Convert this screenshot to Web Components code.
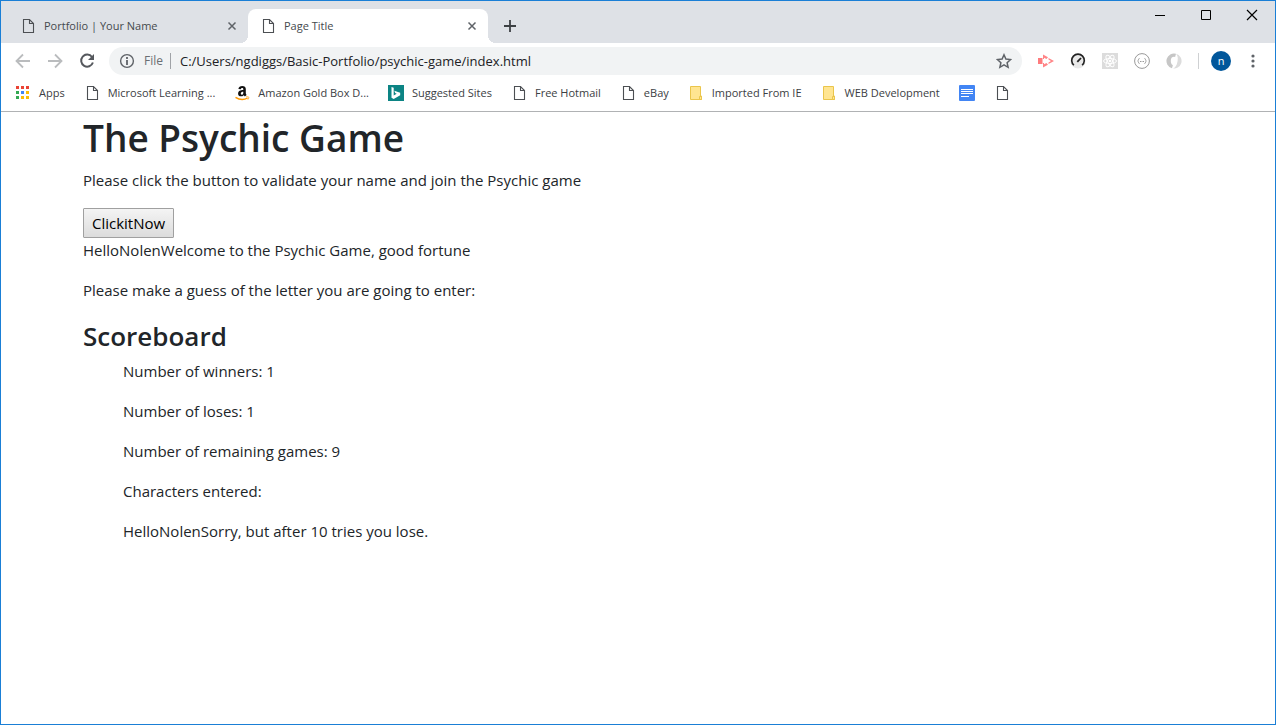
<!DOCTYPE html>
<html lang="en">
<head>
<meta charset="utf-8">
<title>Page Title</title>
<style>
html, body { height: 100%; margin: 0; }
body { font-family: "Open Sans", "Noto Sans", sans-serif; }
</style>
</head>
<body>
<browser-window>
  <browser-tab slot="tabs" label="Portfolio | Your Name"></browser-tab>
  <browser-tab slot="tabs" label="Page Title" active></browser-tab>
  <bookmark-item slot="bookmarks" icon="apps">Apps</bookmark-item>
  <bookmark-item slot="bookmarks" icon="page">Microsoft Learning ...</bookmark-item>
  <bookmark-item slot="bookmarks" icon="amazon">Amazon Gold Box D...</bookmark-item>
  <bookmark-item slot="bookmarks" icon="bing">Suggested Sites</bookmark-item>
  <bookmark-item slot="bookmarks" icon="page">Free Hotmail</bookmark-item>
  <bookmark-item slot="bookmarks" icon="page">eBay</bookmark-item>
  <bookmark-item slot="bookmarks" icon="folder">Imported From IE</bookmark-item>
  <bookmark-item slot="bookmarks" icon="folder">WEB Development</bookmark-item>
  <bookmark-item slot="bookmarks" icon="docs" name="Docs"></bookmark-item>
  <bookmark-item slot="bookmarks" icon="page" name="Untitled"></bookmark-item>
  <psychic-game></psychic-game>
</browser-window>

<script>
const ICONS = {
  page: '<path d="M3.5 1.5h6l4 4v9h-10z M9.5 1.5v4h4" fill="none" stroke="#4c4f53" stroke-width="1.100"/>',
  apps: [['#ea4335', '#ea4335', '#ea4335'], ['#34a853', '#4285f4', '#fbbc05'], ['#34a853', '#fbbc05', '#fbbc05']]
    .map((row, y) => row.map((c, x) => `<rect x="${1 + x * 5}" y="${1 + y * 5}" width="3" height="3" fill="${c}"/>`).join('')).join(''),
  amazon: '<path d="M4.4 4C4.6 1.900 6.200 1 8.200 1c2.300 0 3.600 1 3.600 3.100v4c0 .9.300 1.300.8 1.900l-1.700 1.400c-.6-.4-.9-.8-1.200-1.200-2 2-5.600 1.400-5.600-1.500 0-2.700 2.300-3.600 5.200-3.700v-.8c0-.8-.4-1.200-1.100-1.200-.8 0-1.100.4-1.300 1.200zm4.900 2.700c-1.500 0-2.500.5-2.500 1.800 0 1.700 2.500 1.600 2.500-.6z" fill="#111"/><path d="M1.500 12.300c4 2.700 8.500 2.800 12.200.7" fill="none" stroke="#f90" stroke-width="1.400"/><path d="M12 12c1.400-.4 2.400-.3 2.700.1s-.1 1.700-.8 2.500" fill="none" stroke="#f90" stroke-width=".8"/>',
  bing: '<path d="M0 0h16v16H0z" fill="#0c8484"/><path d="M3.500 2l2.200.8v7.700l3-1.700-1.500-.7-.9-2.300 5.900 2v2.500l-6.500 3.800-2.200-1.300z" fill="#fff"/>',
  folder: '<path d="M2.500 1.500h10v9.500h1v3.500h-11z" fill="#ffe591" stroke="#eac54b"/><path d="M11.500 11.500h2v3h-2z" fill="#ffe591" stroke="#eac54b"/>',
  docs: '<rect width="16" height="16" rx="1" fill="#4285f4"/><path d="M2 4.500h12M2 6.500h12M2 8.500h12M2 11.500h8" stroke="#fff"/>',
  close: '<path d="M4.500 4.500l7 7M11.500 4.500l-7 7" stroke="#5f6368" stroke-width="1.500"/>',
  plus: '<path d="M8 2v12M2 8h12" stroke="#3c4043" stroke-width="1.800"/>',
  back: '<path d="M15 8H2M8 1.500L1.500 8 8 14.500" fill="none" stroke="#babcbe" stroke-width="1.800"/>',
  forward: '<path d="M1 8h13M8 1.500L14.500 8 8 14.500" fill="none" stroke="#babcbe" stroke-width="1.800"/>',
  reload: '<path d="M13 4A6 6 0 1 0 13.900 9.500" fill="none" stroke="#55585d" stroke-width="2"/><path d="M15 1v6H9z" fill="#55585d"/>',
  info: '<circle cx="8" cy="8" r="6.400" fill="none" stroke="#5f6368" stroke-width="1.400"/><path d="M8 7v5M8 4v2" stroke="#5f6368" stroke-width="1.800"/>',
  star: '<path d="M8 1.800l1.900 4.300 4.700.5-3.500 3.100 1 4.600L8 11.900l-4.100 2.400 1-4.600-3.500-3.100 4.700-.5z" fill="none" stroke="#5f6368" stroke-width="1.500"/>',
  cast: '<path d="M0 5h4.500v6H0z" fill="#ff7b7d"/><path d="M5 1.500l5 2.700-1.500 1.800L6 4.800V6H5zM5 14.500l5-2.700L8.500 10 6 11.200V10H5zM10.500 5L16 8l-5.500 3V9.500L13 8l-2.500-1.500z" fill="#ff8587"/>',
  gauge: '<circle cx="8" cy="8" r="7.500" fill="#e9e9e9"/><path d="M3.900 12.200A6.300 6.300 0 1 1 12.100 12.200" fill="none" stroke="#222" stroke-width="1.600"/><path d="M7.300 8.900L11 5" stroke="#222" stroke-width="1.800"/>',
  react: '<path d="M0 0h16v16H0z" fill="#dcdcdc"/><g fill="none" stroke="#fff"><ellipse cx="8" cy="8" rx="6.500" ry="2.500"/><ellipse cx="8" cy="8" rx="6.500" ry="2.500" transform="rotate(60 8 8)"/><ellipse cx="8" cy="8" rx="6.500" ry="2.500" transform="rotate(120 8 8)"/></g><circle cx="8" cy="8" r="1.300" fill="#fff"/>',
  braces: '<circle cx="8" cy="8" r="7.400" fill="none" stroke="#999"/><path d="M5.500 5.500c-1.500 0-.5 2-1.800 2.500 1.300.5.300 2.500 1.800 2.500M10.500 5.500c1.500 0 .5 2 1.800 2.500-1.300.5-.3 2.500-1.800 2.500" fill="none" stroke="#999"/><path d="M6 8.500h1M7.500 8.500h1M9 8.500h1" stroke="#999"/>',
  swirl: '<path d="M10 .7A7.500 7.500 0 1 0 6 15.300" fill="#c6c6c6"/><path d="M10 .7A7.500 7.500 0 1 1 6 15.300C9 16 11 12 11.500 8 12 5 12 3 10 .7z" fill="#dcdcdc"/><ellipse cx="8" cy="8" rx="3.200" ry="4.200" fill="#fff"/>',
  menu: '<g fill="#5f6368"><circle cx="8" cy="3" r="1.600"/><circle cx="8" cy="8" r="1.600"/><circle cx="8" cy="13" r="1.600"/></g>',
  minimize: '<path d="M3 8.500h10" stroke="#000"/>',
  maximize: '<path d="M3.500 3.500h9v9h-9z" fill="none" stroke="#000"/>',
  exit: '<path d="M3 3l10 10M13 3L3 13" stroke="#000" stroke-width="1.200"/>'
};

class UiIcon extends HTMLElement {
  constructor() { super(); this.attachShadow({ mode: 'open' }); }
  connectedCallback() {
    this.shadowRoot.innerHTML = `<style>:host{display:block;width:16px;height:16px;flex:none}svg{display:block}</style>
      <svg width="16" height="16" viewBox="0 0 16 16" aria-hidden="true">${ICONS[this.getAttribute('name')]}</svg>`;
  }
}
customElements.define('ui-icon', UiIcon);

class IconButton extends HTMLElement {
  constructor() { super(); this.attachShadow({ mode: 'open' }); }
  connectedCallback() {
    this.shadowRoot.innerHTML = `<style>
      :host{display:block;flex:none}
      button{display:block;border:0;margin:0;padding:0;background:none}
      </style><button type="button" aria-label="${this.getAttribute('label')}"><ui-icon name="${this.getAttribute('icon')}"></ui-icon></button>`;
  }
}
customElements.define('icon-button', IconButton);

class BrowserTab extends HTMLElement {
  constructor() { super(); this.attachShadow({ mode: 'open' }); }
  connectedCallback() {
    const label = this.getAttribute('label');
    this.shadowRoot.innerHTML = `<style>
      :host{display:flex;align-items:center;gap:8px;box-sizing:border-box;flex:0 1 240px;height:34px;padding:0 8px 0 12px;
        font-size:11px;line-height:16px;color:#45494d;position:relative}
      :host([active]){background:#fff;border-radius:8px 8px 0 0}
      :host([active])::before,:host([active])::after{content:"";position:absolute;bottom:0;width:8px;height:8px}
      :host([active])::before{right:100%;background:radial-gradient(circle at 0 0,transparent 8px,#fff 8px)}
      :host([active])::after{left:100%;background:radial-gradient(circle at 100% 0,transparent 8px,#fff 8px)}
      span{flex:1;white-space:nowrap;overflow:hidden}
      </style><ui-icon name="page"></ui-icon><span>${label}</span><icon-button icon="close" label="Close ${label}"></icon-button>`;
  }
}
customElements.define('browser-tab', BrowserTab);

class BookmarkItem extends HTMLElement {
  constructor() { super(); this.attachShadow({ mode: 'open' }); }
  connectedCallback() {
    const name = this.getAttribute('name');
    this.shadowRoot.innerHTML = `<style>
      :host{display:block;flex:none}
      a{display:flex;align-items:center;gap:8px;color:#3c4043;text-decoration:none;font-size:11px;line-height:16px;white-space:nowrap}
      </style><a href="#"${name ? ` aria-label="${name}"` : ''}><ui-icon name="${this.getAttribute('icon')}"></ui-icon><slot></slot></a>`;
  }
}
customElements.define('bookmark-item', BookmarkItem);

class BrowserToolbar extends HTMLElement {
  constructor() {
    super();
    this.attachShadow({ mode: 'open' }).innerHTML = `<style>
      :host{display:flex;align-items:center;height:36px;padding:0 14px;gap:16px}
      .omnibox{flex:1;display:flex;align-items:center;gap:9px;height:28px;margin:0 0 0 -2px;padding:0 10px;border-radius:14px;background:#f1f3f4;box-sizing:border-box}
      label{font-size:12px;line-height:16px;color:#6b6f73;padding-right:7px;border-right:1px solid #a0a3a7}
      input{flex:1;min-width:0;border:0;padding:0;margin:0;background:none;outline:0;font:13px/20px "Open Sans","Noto Sans",sans-serif;color:#202124}
      hr{width:1px;height:16px;margin:0;border:0;background:#cfd1d3}
      .avatar{width:20px;height:20px;margin:0 -2px 0 -4px;border:0;padding:0;border-radius:50%;background:#01579b;color:#fff;font:11px/18px "Open Sans",sans-serif}
      </style>
      <icon-button icon="back" label="Back"></icon-button>
      <icon-button icon="forward" label="Forward"></icon-button>
      <icon-button icon="reload" label="Reload"></icon-button>
      <div class="omnibox">
        <ui-icon name="info"></ui-icon>
        <label for="url">File</label>
        <input id="url" type="text" spellcheck="false" value="C:/Users/ngdiggs/Basic-Portfolio/psychic-game/index.html">
        <icon-button icon="star" label="Bookmark this page"></icon-button>
      </div>
      <icon-button icon="cast" label="Screen recorder"></icon-button>
      <icon-button icon="gauge" label="Page speed"></icon-button>
      <icon-button icon="react" label="Developer tools"></icon-button>
      <icon-button icon="braces" label="JSON viewer"></icon-button>
      <icon-button icon="swirl" label="JSON formatter"></icon-button>
      <hr>
      <button class="avatar" type="button">n</button>
      <icon-button icon="menu" label="Menu"></icon-button>`;
  }
}
customElements.define('browser-toolbar', BrowserToolbar);

class BrowserWindow extends HTMLElement {
  constructor() {
    super();
    this.attachShadow({ mode: 'open' }).innerHTML = `<style>
      :host{display:block;box-sizing:border-box;min-height:100%;border:1px solid #1a7fd6;background:#fff}
      .strip{display:flex;align-items:flex-start;background:#dee1e6;height:42px}
      .tabs{display:flex;flex:1;align-items:center;padding:8px 0 0 7px}
      .new{margin-left:14px}
      .controls{display:flex;gap:30px;padding:6px 15px 0 0}
      nav{display:flex;align-items:center;gap:19px;height:28px;padding:0 14px 4px;border-bottom:1px solid #b0b2b4;overflow:hidden}
      </style>
      <header>
        <div class="strip">
          <div class="tabs"><slot name="tabs"></slot><icon-button class="new" icon="plus" label="New tab"></icon-button></div>
          <div class="controls">
            <icon-button icon="minimize" label="Minimize"></icon-button>
            <icon-button icon="maximize" label="Maximize"></icon-button>
            <icon-button icon="exit" label="Close window"></icon-button>
          </div>
        </div>
        <browser-toolbar></browser-toolbar>
        <nav aria-label="Bookmarks"><slot name="bookmarks"></slot></nav>
      </header>
      <slot></slot>`;
  }
}
customElements.define('browser-window', BrowserWindow);

class PsychicGame extends HTMLElement {
  constructor() {
    super();
    this.attachShadow({ mode: 'open' }).innerHTML = `<style>
      :host{display:block;box-sizing:border-box;max-width:1140px;margin:0 auto;padding:0 15px;color:#212529;font-size:15px;line-height:24px}
      h1,h2{margin:0 0 5px;font-weight:600}
      h1{font-size:37px;line-height:51px}
      h2{font-size:26px;line-height:36px}
      p{margin:0 0 16px}
      button{display:block;height:30px;padding:0 8px;border:1px solid #a0a0a0;border-radius:1px;background:linear-gradient(#f4f4f4,#dcdcdc);color:#000;font:15px/24px "Open Sans","Noto Sans",sans-serif}
      .scores{padding-left:40px}
      </style>
      <main>
        <h1>The Psychic Game</h1>
        <p>Please click the button to validate your name and join the Psychic game</p>
        <button type="button">ClickitNow</button>
        <p>HelloNolenWelcome to the Psychic Game, good fortune</p>
        <p>Please make a guess of the letter you are going to enter:</p>
        <h2>Scoreboard</h2>
        <div class="scores">
          <p>Number of winners: 1</p>
          <p>Number of loses: 1</p>
          <p>Number of remaining games: 9</p>
          <p>Characters entered:</p>
          <p>HelloNolenSorry, but after 10 tries you lose.</p>
        </div>
      </main>`;
  }
}
customElements.define('psychic-game', PsychicGame);
</script>
</body>
</html>
